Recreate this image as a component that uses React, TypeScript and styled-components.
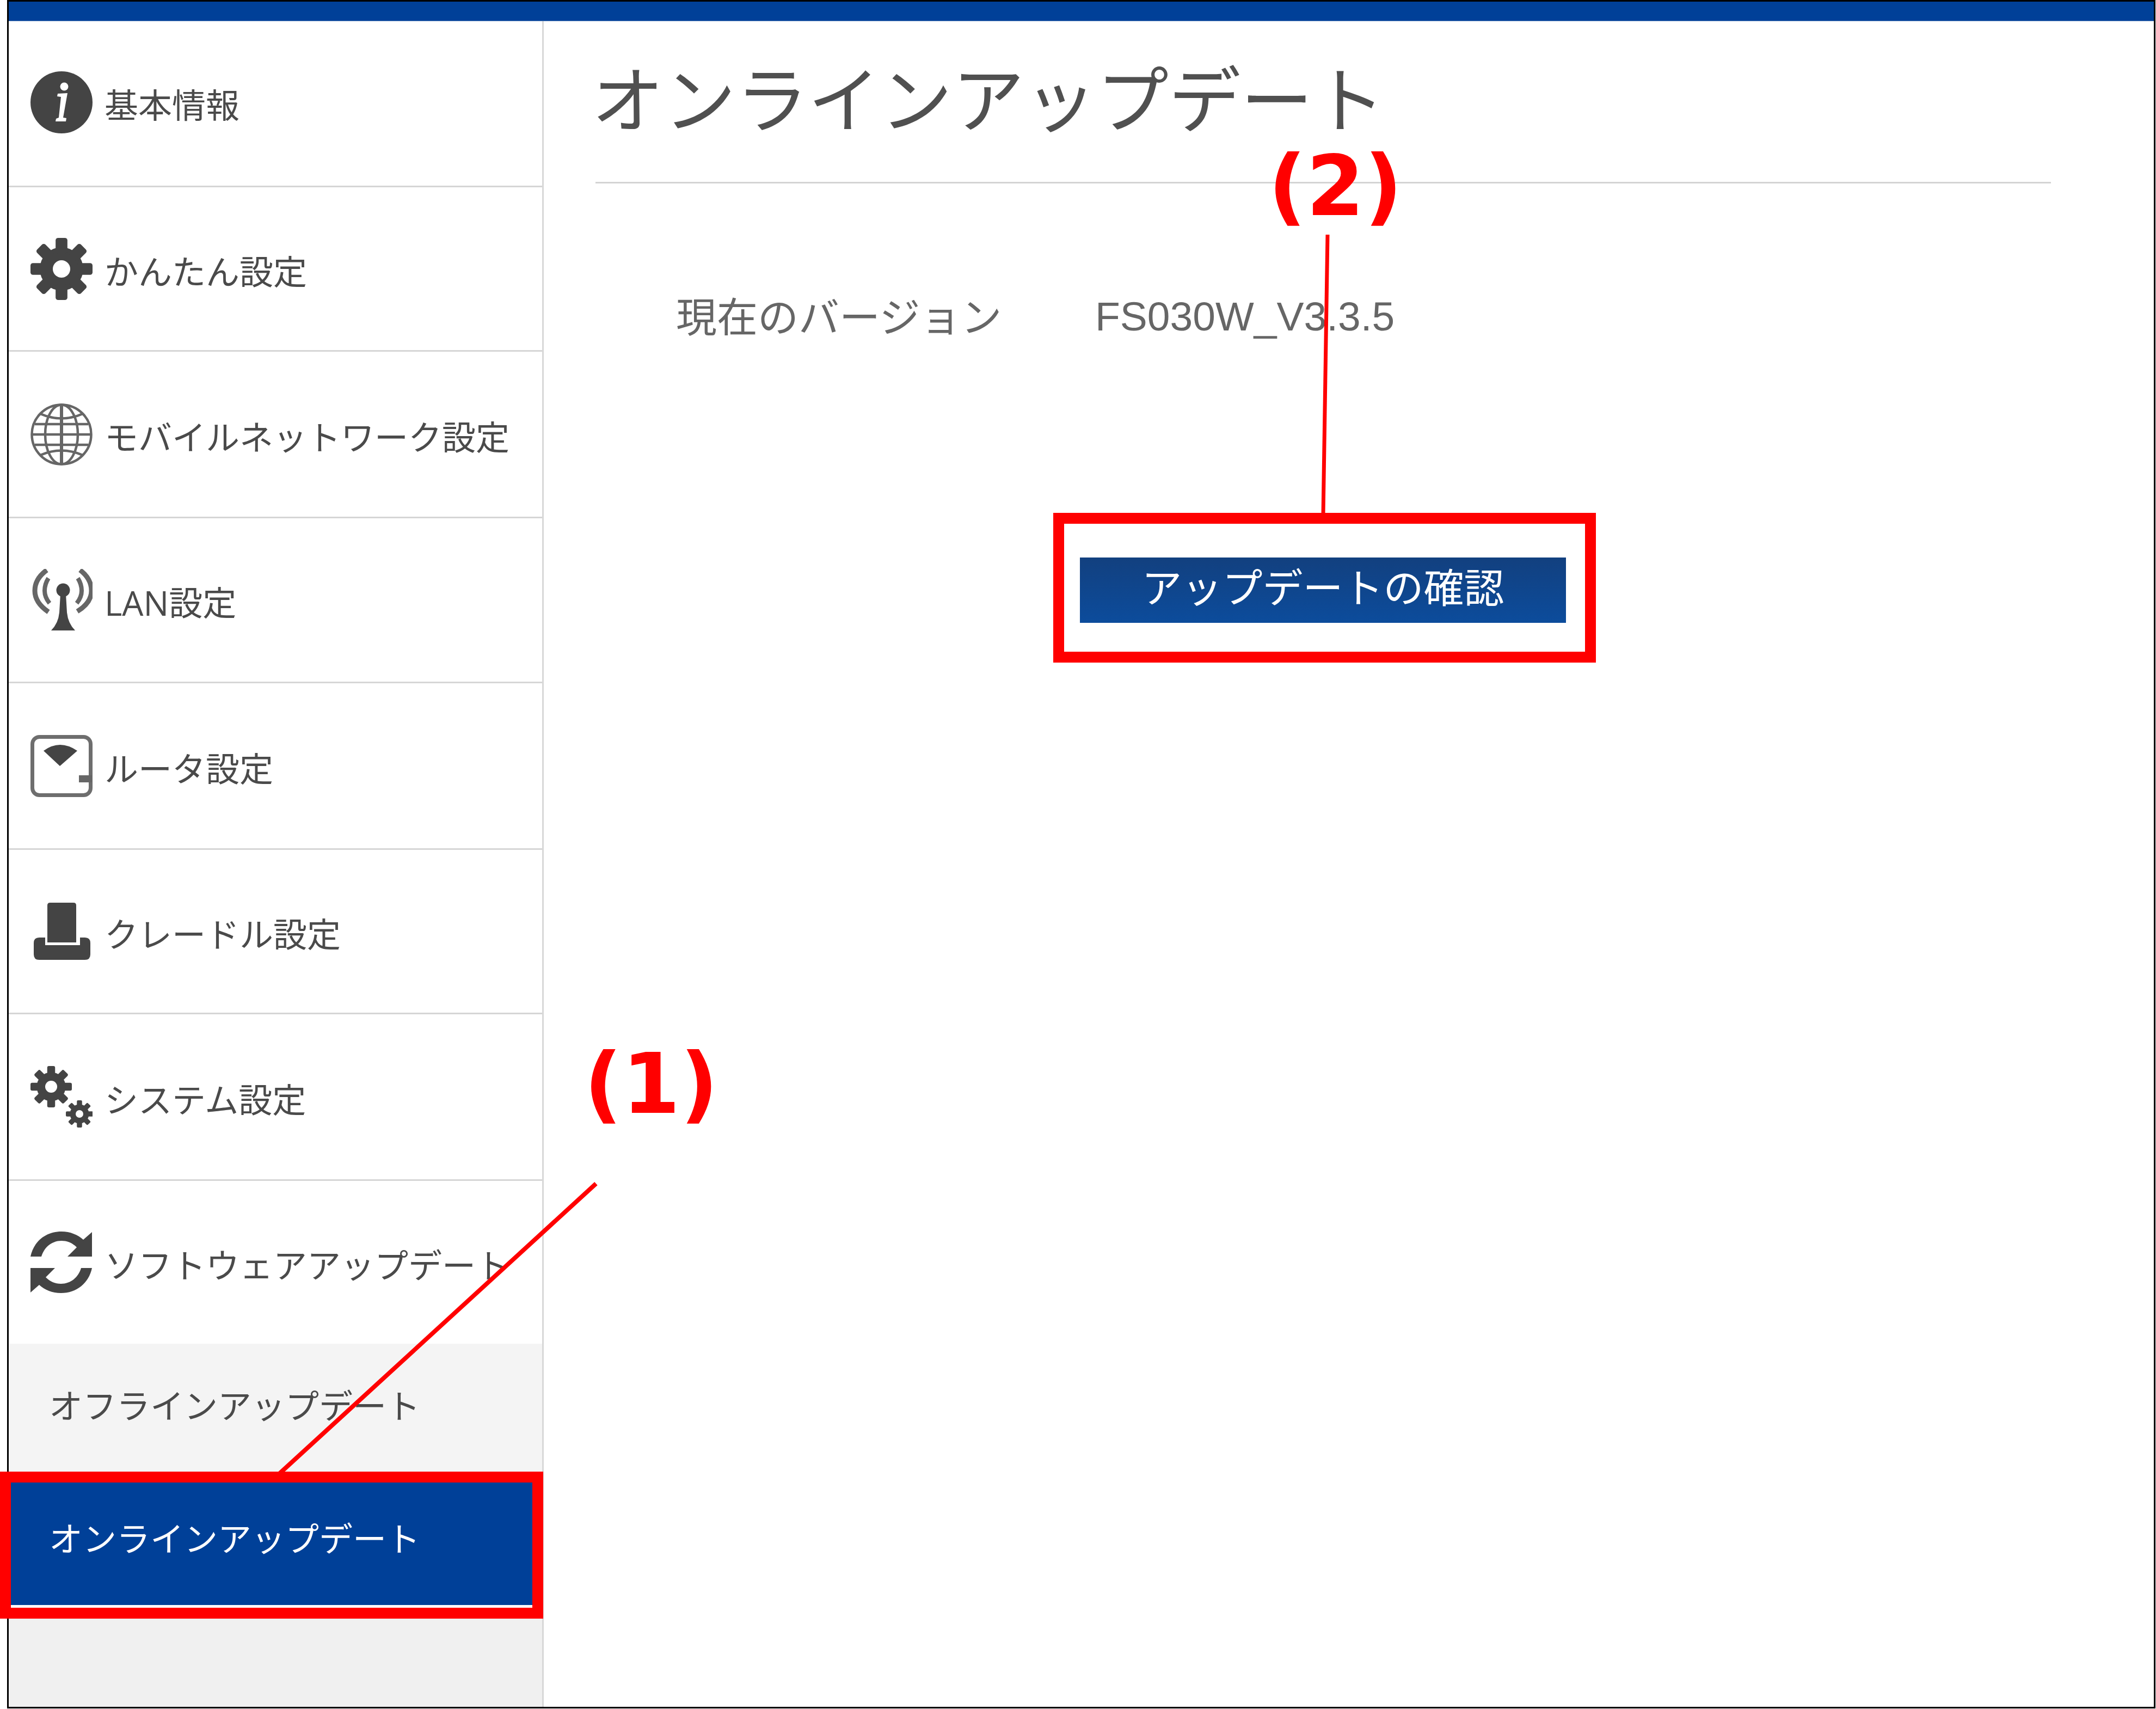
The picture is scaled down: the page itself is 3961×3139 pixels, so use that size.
import React from 'react';
import styled, { createGlobalStyle } from 'styled-components';

const GlobalStyle = createGlobalStyle`
  html, body {
    margin: 0;
    padding: 0;
    background: #ffffff;
  }
  body {
    font-family: "Noto Sans CJK JP", "Liberation Sans", sans-serif;
  }
`;

const Page = styled.div`
  position: relative;
  width: 3961px;
  height: 3139px;
  padding: 0 1px 0 13px;
  box-sizing: border-box;
  overflow: hidden;
`;

const Frame = styled.div`
  height: 3138px;
  box-sizing: border-box;
  border: 3px solid #000000;
  display: flex;
  flex-direction: column;
`;

const TopBar = styled.div`
  height: 36px;
  flex: none;
  box-sizing: border-box;
  background: #004098;
  border-bottom: 1px solid #5f86bd;
`;

const Body = styled.div`
  flex: 1;
  display: flex;
  min-height: 0;
`;

const Sidebar = styled.nav`
  width: 983px;
  flex: none;
  box-sizing: border-box;
  border-right: 3px solid #d8d8d8;
  background: #f0f0f0;
  display: flex;
  flex-direction: column;
`;

const MenuRow = styled.div<{ $height: number; $first?: boolean; $last?: boolean }>`
  height: ${p => p.$height}px;
  flex: none;
  box-sizing: border-box;
  background: #ffffff;
  border-bottom: ${p => (p.$last ? 'none' : '3px solid #d6d6d6')};
  padding-left: 40px;
  padding-bottom: ${p => (p.$first ? 5 : 0)}px;
  display: flex;
  align-items: center;
  gap: 22px;
  font-size: 62px;
  color: #4a4a4a;
`;

const MenuLabel = styled.span`
  position: relative;
  top: 5px;
  font-family: "Open Sans", "Noto Sans CJK JP", sans-serif;
  line-height: 90px;
  white-space: nowrap;
`;

const IconSvg = styled.svg`
  width: 114px;
  height: 114px;
  flex: none;
  display: block;
`;

const SubRow = styled.div<{ $active?: boolean; $height: number }>`
  height: ${p => p.$height}px;
  flex: none;
  box-sizing: border-box;
  padding-left: 74px;
  padding-bottom: ${p => (p.$active ? 14 : 22)}px;
  display: flex;
  align-items: center;
  font-size: 62px;
  white-space: nowrap;
  color: ${p => (p.$active ? '#ffffff' : '#4a4a4a')};
  background: ${p => (p.$active ? '#004098' : '#f4f4f4')};
  border-bottom: ${p => (p.$active ? '5px solid #ffffff' : 'none')};
`;

const Main = styled.main`
  flex: 1;
  padding: 0 189px 0 95px;
  background: #ffffff;
  color: #4a4a4a;
`;

const Title = styled.h1`
  margin: 0;
  height: 298px;
  box-sizing: border-box;
  border-bottom: 3px solid #d4d4d4;
  padding-top: 61px;
  font-size: 132.5px;
  font-weight: 400;
  line-height: 150px;
  text-indent: -7px;
  white-space: nowrap;
  color: #505050;
`;

const VersionRow = styled.div`
  display: flex;
  align-items: center;
  margin-top: 190px;
  padding-left: 148px;
  height: 100px;
  font-size: 75px;
  color: #666666;
`;

const VersionLabel = styled.span`
  width: 770px;
  flex: none;
`;

const VersionValue = styled.span`
  position: relative;
  top: 4px;
  font-family: "Liberation Sans", Arial, sans-serif;
`;

const ButtonRow = styled.div`
  display: flex;
  margin-top: 397px;
  padding-left: 890px;
`;

const CheckButton = styled.button`
  width: 893px;
  height: 120px;
  border: none;
  padding: 0 0 18px;
  background: linear-gradient(to bottom, #12407f, #0c4c9c);
  color: #ffffff;
  font-family: inherit;
  font-size: 74px;
  line-height: 1;
`;

const Highlight = styled.div<{ $x: number; $y: number; $w: number; $h: number }>`
  position: absolute;
  left: ${p => p.$x}px;
  top: ${p => p.$y}px;
  width: ${p => p.$w}px;
  height: ${p => p.$h}px;
  box-sizing: border-box;
  border: 20px solid #ff0000;
  pointer-events: none;
`;

const Callout = styled.div<{ $x: number; $y: number }>`
  position: absolute;
  left: ${p => p.$x}px;
  top: ${p => p.$y}px;
  font-family: "DejaVu Sans", sans-serif;
  font-weight: 700;
  font-size: 153px;
  line-height: 1;
  color: #ff0000;
  white-space: nowrap;
`;

const LeaderLines = styled.svg`
  position: absolute;
  left: 0;
  top: 0;
  width: 3961px;
  height: 3139px;
  pointer-events: none;
`;

const DARK = '#444444';

// eight toothed gear, hole is painted white on top
const Gear = ({ cx, cy, r, hole }: { cx: number; cy: number; r: number; hole: number }) => (
  <g fill={DARK}>
    <circle cx={cx} cy={cy} r={r * 0.7} />
    {[0, 45, 90, 135, 180, 225, 270, 315].map(a => (
      <rect
        key={a}
        x={cx - r * 0.19}
        y={cy - r}
        width={r * 0.38}
        height={r * 0.5}
        rx={r * 0.08}
        transform={`rotate(${a} ${cx} ${cy})`}
      />
    ))}
    <circle cx={cx} cy={cy} r={hole} fill="#ffffff" />
  </g>
);

const InfoIcon = () => (
  <IconSvg viewBox="0 0 114 114">
    <circle cx="57" cy="57" r="57" fill={DARK} />
    <circle cx="62" cy="28" r="7.5" fill="#ffffff" />
    <path d="M50 41 L68 40 L60 85 L66 86 L65 92 L46 92 L47 87 L52 85 L56 47 L49 46 Z" fill="#ffffff" />
  </IconSvg>
);

const GearIcon = () => (
  <IconSvg viewBox="0 0 114 114">
    <Gear cx={57} cy={57} r={57} hole={16} />
  </IconSvg>
);

const GlobeIcon = () => (
  <IconSvg viewBox="0 0 114 114" fill="none" stroke="#666666" strokeWidth="4.5">
    <circle cx="57" cy="57" r="54.5" />
    <ellipse cx="57" cy="57" rx="30" ry="54.5" />
    <path d="M57 2 V112" strokeWidth="6" />
    <path d="M3 57 H111 M8 38 H106 M8 76 H106" />
    <path d="M18 19 Q57 36 96 19 M18 95 Q57 78 96 95" />
  </IconSvg>
);

const AntennaIcon = () => (
  <IconSvg viewBox="0 0 114 114">
    <g fill="none" stroke="#666666" strokeWidth="9">
      <path d="M30 2 Q8 18 8 40 Q8 62 33 79" />
      <path d="M91 2 Q112 18 112 40 Q112 62 86 78" />
      <path d="M33 17 Q26 28 26 40 Q26 52 35 63" strokeWidth="8" />
      <path d="M87 17 Q94 28 94 40 Q94 52 85 63" strokeWidth="8" />
    </g>
    <circle cx="60" cy="39" r="12.5" fill={DARK} />
    <path d="M55 46 H65 L67 80 Q69 100 82 113 H38 Q51 100 53 80 Z" fill={DARK} />
  </IconSvg>
);

const RouterIcon = () => (
  <IconSvg viewBox="0 0 114 114">
    <rect x="3.5" y="3.5" width="107" height="107" rx="13" fill="#ffffff" stroke="#6e6e6e" strokeWidth="7" />
    <path d="M24 29 Q54 7 86 29 L54 57 Z" fill={DARK} />
    <rect x="89" y="74" width="24" height="13" fill="#666666" />
  </IconSvg>
);

const CradleIcon = () => (
  <IconSvg viewBox="0 0 114 114">
    <path d="M36 4 H79 Q84 4 84 9 V77 H31 V9 Q31 4 36 4 Z" fill={DARK} />
    <path
      d="M16 68 H27 V82 H91 V68 H100 Q110 68 110 78 V99 Q110 109 100 109 H16 Q6 109 6 99 V78 Q6 68 16 68 Z"
      fill={DARK}
    />
  </IconSvg>
);

const SystemIcon = () => (
  <IconSvg viewBox="0 0 114 114">
    <Gear cx={38} cy={38} r={38} hole={11} />
    <Gear cx={90} cy={88} r={25} hole={7} />
  </IconSvg>
);

const SyncIcon = () => {
  const arm =
    'M0 46 C6 18 28 0 57 0 C73 0 87 6 97 15 L113 1 V46 H68 L85 29 C77 21 68 17 57 17 C39 17 25 29 20 46 Z';
  return (
    <IconSvg viewBox="0 0 114 114">
      <path d={arm} fill={DARK} />
      <path d={arm} fill={DARK} transform="rotate(180 56.5 56.5)" />
    </IconSvg>
  );
};

const menuItems = [
  { label: '基本情報', icon: <InfoIcon />, height: 305, first: true },
  { label: 'かんたん設定', icon: <GearIcon />, height: 302 },
  { label: 'モバイルネットワーク設定', icon: <GlobeIcon />, height: 306 },
  { label: 'LAN設定', icon: <AntennaIcon />, height: 303 },
  { label: 'ルータ設定', icon: <RouterIcon />, height: 306 },
  { label: 'クレードル設定', icon: <CradleIcon />, height: 302 },
  { label: 'システム設定', icon: <SystemIcon />, height: 306 },
];

export default function App() {
  return (
    <Page>
      <GlobalStyle />
      <Frame>
        <TopBar />
        <Body>
          <Sidebar>
            {menuItems.map(item => (
              <MenuRow key={item.label} $height={item.height} $first={item.first}>
                {item.icon}
                <MenuLabel>{item.label}</MenuLabel>
              </MenuRow>
            ))}
            <MenuRow $height={299} $last>
              <SyncIcon />
              <MenuLabel>ソフトウェアアップデート</MenuLabel>
            </MenuRow>
            <SubRow $height={244}>オフラインアップデート</SubRow>
            <SubRow $active $height={241}>オンラインアップデート</SubRow>
          </Sidebar>
          <Main>
            <Title>オンラインアップデート</Title>
            <VersionRow>
              <VersionLabel>現在のバージョン</VersionLabel>
              <VersionValue>FS030W_V3.3.5</VersionValue>
            </VersionRow>
            <ButtonRow>
              <CheckButton>アップデートの確認</CheckButton>
            </ButtonRow>
          </Main>
        </Body>
      </Frame>

      <LeaderLines viewBox="0 0 3961 3139">
        <line x1="2439" y1="431" x2="2431" y2="945" stroke="#ff0000" strokeWidth="7" />
        <line x1="1095" y1="2174" x2="514" y2="2706" stroke="#ff0000" strokeWidth="8" />
      </LeaderLines>
      <Highlight $x={1935} $y={942} $w={997} $h={275} />
      <Highlight $x={0} $y={2703} $w={998} $h={270} />
      <Callout $x={2330} $y={266}>(2)</Callout>
      <Callout $x={1073} $y={1915}>(1)</Callout>
    </Page>
  );
}
